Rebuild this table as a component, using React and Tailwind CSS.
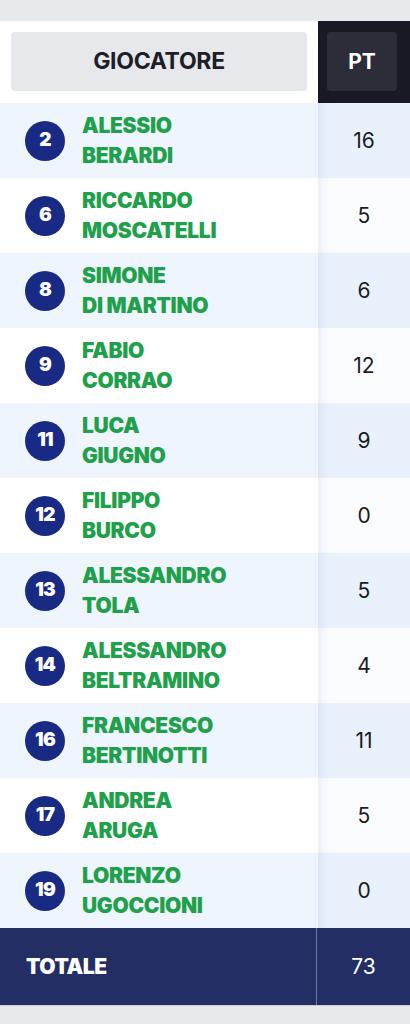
import React from "react";

const players = [
  [2, "ALESSIO", "BERARDI", 16],
  [6, "RICCARDO", "MOSCATELLI", 5],
  [8, "SIMONE", "DI MARTINO", 6],
  [9, "FABIO", "CORRAO", 12],
  [11, "LUCA", "GIUGNO", 9],
  [12, "FILIPPO", "BURCO", 0],
  [13, "ALESSANDRO", "TOLA", 5],
  [14, "ALESSANDRO", "BELTRAMINO", 4],
  [16, "FRANCESCO", "BERTINOTTI", 11],
  [17, "ANDREA", "ARUGA", 5],
  [19, "LORENZO", "UGOCCIONI", 0],
];

export default function App() {
  return (
    <div
      className="w-[410px] h-[1024px] bg-[#e6eaed] pt-[21px] overflow-hidden"
      style={{ fontFamily: "Inter, 'Noto Sans', sans-serif" }}
    >
      <div className="flex h-[82px]">
        <div className="w-[318px] bg-white px-[11px] py-[11px]">
          <div className="h-[59px] rounded-[4px] bg-[#e6e8eb] flex items-center justify-center text-[23px] font-bold text-[#1d1e27] tracking-[-0.3px]">
            GIOCATORE
          </div>
        </div>
        <div className="flex-1 bg-[#181925] pl-[9px] pr-[13px] py-[11px]">
          <div className="h-[59px] w-[70px] rounded-[4px] bg-[#2c2d38] flex items-center justify-center text-[21px] font-bold text-white">
            PT
          </div>
        </div>
      </div>
      {players.map(([n, first, last, pt], i) => {
        const light = i % 2 === 0;
        return (
          <div key={n} className="flex h-[75px]">
            <div
              className={`w-[318px] flex items-center pl-[25px] ${
                light ? "bg-[#eef5fd]" : "bg-white"
              }`}
            >
              <div className="w-[40px] h-[40px] rounded-full bg-[#192a84] flex items-center justify-center text-white text-[19px] font-black tracking-[-0.8px]">
                {n}
              </div>
              <div className="ml-[17px] text-[#20a04b] text-[21px] font-black leading-[30px] tracking-[-0.3px]">
                <div>{first}</div>
                <div>{last}</div>
              </div>
            </div>
            <div
              className={`flex-1 flex items-center justify-center text-[21px] text-[#1b1b22] shadow-[inset_10px_0_10px_-8px_rgba(40,80,140,0.10)] ${
                light ? "bg-[#e8f1fc]" : "bg-[#fafcfe]"
              }`}
            >
              {pt}
            </div>
          </div>
        );
      })}
      <div className="flex h-[78px] bg-[#222e64] border-b border-[#c9d0dc]">
        <div className="w-[317px] flex items-center pl-[26px] text-white text-[21px] font-black tracking-[-0.4px] border-r border-[#6b76a3]">
          TOTALE
        </div>
        <div className="flex-1 flex items-center justify-center text-white text-[21px]">
          73
        </div>
      </div>
    </div>
  );
}
